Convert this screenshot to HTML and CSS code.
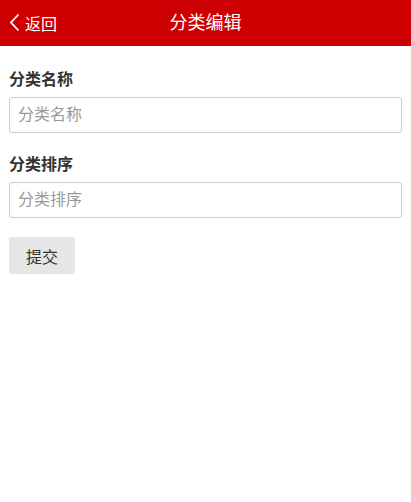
FILE: index.html
```html
<!DOCTYPE html>
<html lang="zh-CN">
<head>
    <meta charset="UTF-8">
    <meta name="viewport" content="width=device-width, initial-scale=1.0">
    <title>分类编辑</title>
    <link rel="stylesheet" href="styles.css">
</head>
<body>
    <div class="header">
        <a class="back" href="#">
            <svg class="back-icon" width="11" height="19" viewBox="0 0 11 19">
                <path d="M9.5 1.5 L2 9.5 L9.5 17.5" fill="none" stroke="#fff" stroke-width="1.8"/>
            </svg>
            <span>返回</span>
        </a>
        <h1>分类编辑</h1>
    </div>

    <form class="content">
        <div class="form-group">
            <label class="form-label">分类名称</label>
            <input class="form-input" type="text" placeholder="分类名称">
        </div>
        <div class="form-group">
            <label class="form-label">分类排序</label>
            <input class="form-input" type="text" placeholder="分类排序">
        </div>
        <button class="submit-button" type="button">提交</button>
    </form>
</body>
</html>
```

FILE: styles.css
```css
/* Reset styles */
* {
    margin: 0;
    padding: 0;
    box-sizing: border-box;
    font-family: "Liberation Sans", "Noto Sans CJK SC", sans-serif;
}

body {
    background-color: #fff;
    color: #333;
}

.header {
    position: relative;
    height: 46px;
    background-color: #cc0000;
    display: flex;
    align-items: center;
    justify-content: center;
}

.header h1 {
    font-size: 18px;
    font-weight: normal;
    color: #fff;
    line-height: 46px;
}

/* back link sits over the header bar */
.back {
    position: absolute;
    left: 9px;
    top: 0;
    height: 46px;
    display: flex;
    align-items: center;
    gap: 5px;
    color: #fff;
    text-decoration: none;
    font-size: 16px;
}

.back-icon {
    display: block;
    margin-top: -1px;
}

.content {
    padding: 23px 9px 0;
}

.form-group {
    margin-bottom: 21px;
}

.form-label {
    display: block;
    font-size: 16px;
    font-weight: bold;
    line-height: 22px;
    margin-bottom: 6px;
    color: #333;
}

.form-input {
    display: block;
    width: 100%;
    height: 36px;
    padding: 0 8px;
    border: 1px solid #ccc;
    border-radius: 3px;
    font-size: 16px;
    color: #333;
    outline: none;
}

.form-input::placeholder {
    color: #999;
}

.submit-button {
    margin-top: -2px;
    width: 66px;
    height: 37px;
    border: none;
    border-radius: 3px;
    background-color: #e6e6e6;
    color: #333;
    font-size: 16px;
}
```
